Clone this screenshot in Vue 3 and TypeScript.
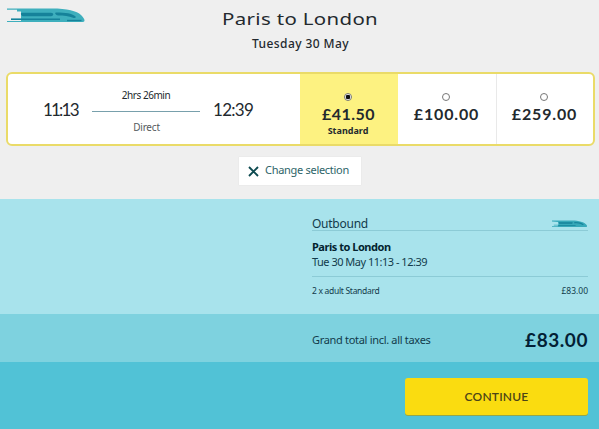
<script setup lang="ts">
import { ref } from 'vue'

interface Fare {
  price: string
  name: string
}

const fares: Fare[] = [
  { price: '£41.50', name: 'Standard' },
  { price: '£100.00', name: '' },
  { price: '£259.00', name: '' },
]
const selected = ref<number>(0)
</script>

<template>
  <main class="page">
    <section class="top">
      <header class="header">
        <svg class="train" viewBox="0 0 78 15" preserveAspectRatio="none" aria-hidden="true">
          <path d="M0 .5H45C60 .5 70 3 74 7c2 2 3.500 4 3.500 5.500 0 1-1 1.500-3 1.500H0v-1H14V11.700H4v-1H14V3.500H10V1.700H0Z" fill="#3eafbd" />
          <path d="M15 4.800H44c3 0 3 3.400 0 3.400H16c-2 0-3-3.400-1-3.400ZM49 4.500c10 0 16 1 19 3.500 2 1.500 0 2.500-2 1.800C62 8 57 7.500 51 7.500c-2 0-4-3-2-3ZM4 10.600H53v1.400H4Z" fill="#15829a" />
          <path d="M60 12.500H74.500" fill="none" stroke="#15829a" stroke-width="1.400" />
        </svg>
        <h1 class="title">Paris to London</h1>
        <p class="date">Tuesday 30 May</p>
      </header>

      <div class="card">
        <div class="journey">
          <span class="time depart">11:13</span>
          <div class="leg">
            <span class="duration">2hrs 26min</span>
            <span class="track"></span>
            <span class="direct">Direct</span>
          </div>
          <span class="time arrive">12:39</span>
        </div>
        <div
          v-for="(fare, i) in fares"
          :key="fare.price"
          class="fare"
          :class="{ active: selected === i }"
          @click="selected = i"
        >
          <span class="radio"></span>
          <span class="price">{{ fare.price }}</span>
          <span class="class-name">{{ fare.name }}</span>
        </div>
      </div>

      <button class="change">
        <svg class="cross" viewBox="0 0 11 11" aria-hidden="true">
          <path d="M1 1L10 10M10 1L1 10" fill="none" stroke="#0d4a50" stroke-width="1.9" />
        </svg>
        <span class="change-label">Change selection</span>
      </button>
    </section>

    <section class="summary">
      <div class="outbound">
        <span class="outbound-label">Outbound</span>
        <svg class="train-small" viewBox="0 0 80 16" preserveAspectRatio="none" aria-hidden="true">
          <path d="M0 .8H44C60 .8 72 4 77 10c2.500 3.500.5 4-4 4H0v-1.500H13V11H4V9.500H14V4L0 2.800Z" fill="#36a9b9" />
          <path d="M14 4.500H45c2 0 1 3-1 3H16ZM50 4c10 0 17 1.600 21 5l-3 .8C63 7 57 6.500 49 6.500ZM14 10.300H54l-3 1.700H14Z" fill="#15829a" />
        </svg>
      </div>
      <div class="trip">
        <span class="trip-name">Paris to London</span>
        <span class="trip-time">Tue 30 May 11:13 - 12:39</span>
      </div>
      <div class="passengers">
        <span class="adults">2 x adult Standard</span>
        <span class="adults-price">£83.00</span>
      </div>
    </section>

    <section class="total">
      <span class="total-label">Grand total incl. all taxes</span>
      <span class="total-price">£83.00</span>
    </section>

    <footer class="footer">
      <button class="continue"><span class="continue-label">CONTINUE</span></button>
    </footer>
  </main>
</template>

<style>
body {
  margin: 0;
}
</style>

<style scoped>
* {
  box-sizing: border-box;
}
.page {
  width: 599px;
  height: 429px;
  display: flex;
  flex-direction: column;
  overflow: hidden;
  font-family: "Noto Sans", sans-serif;
  color: #23292e;
  white-space: nowrap;
}
button {
  border: 0;
  padding: 0;
  font-family: inherit;
}
.top {
  height: 199px;
  background: #efefef;
  display: flex;
  flex-direction: column;
  align-items: center;
}
.header {
  width: 599px;
  height: 72px;
  display: grid;
  grid-template-columns: 86px 1fr 86px;
  grid-template-rows: 34px 20px;
  justify-items: center;
}
.train {
  width: 78px;
  height: 15px;
  margin: 8px 0 0 7px;
  justify-self: start;
}
.title {
  margin: 3px 0 0 2px;
  font-size: 17px;
  line-height: 31px;
  font-weight: 400;
  letter-spacing: 0.300px;
  transform: scaleX(1.2);
}
.date {
  grid-column: 2;
  margin: 0 0 0 2px;
  font-size: 12px;
  line-height: 20px;
  font-weight: 500;
  letter-spacing: 0.400px;
}
.card {
  width: 589px;
  height: 74px;
  margin-left: 2px;
  display: grid;
  grid-template-columns: 292px 98px 98px 97px;
  background: #fff;
  border: 2px solid #eadb68;
  border-radius: 6px;
  overflow: hidden;
}
.journey {
  display: grid;
  grid-template-columns: 84px 108px 1fr;
}
.time {
  font-family: Lato, sans-serif;
  font-size: 17px;
  line-height: 72px;
}
.depart {
  padding-left: 35px;
  letter-spacing: -1.800px;
}
.arrive {
  padding-left: 13px;
  letter-spacing: -0.700px;
}
.leg {
  display: flex;
  flex-direction: column;
  align-items: center;
  padding-top: 13px;
  font-size: 10px;
  line-height: 16px;
}
.duration {
  letter-spacing: -0.450px;
}
.track {
  width: 108px;
  height: 1px;
  margin: 8px 0 7px;
  background: #78a0ac;
}
.direct {
  margin-left: 1px;
  letter-spacing: -0.200px;
  color: #555a5e;
}
.fare {
  display: flex;
  flex-direction: column;
  align-items: center;
  padding: 19px 3px 0 0;
  border-left: 1px solid #e9e9e9;
}
.fare:last-child {
  padding-right: 2px;
}
.fare.active {
  background: #fdf281;
  border-left-color: #fdf281;
}
.fare.active + .fare,
.journey + .fare {
  border-left-color: transparent;
}
.radio {
  width: 8px;
  height: 8px;
  border: 1px solid #777;
  border-radius: 50%;
  background: #fff;
}
.active .radio {
  background: radial-gradient(circle, #111 0 2px, #fff 2.600px);
}
.price {
  font-family: Lato, sans-serif;
  font-size: 16px;
  line-height: 20px;
  font-weight: 700;
  letter-spacing: 0.850px;
  margin: 3px -1px 0 0;
}
.active .price {
  letter-spacing: 0.450px;
}
.class-name {
  font-size: 9px;
  line-height: 13px;
  font-weight: 700;
}
.change {
  width: 122px;
  height: 28px;
  margin: 11px 0 0 1px;
  display: flex;
  align-items: center;
  gap: 6px;
  padding-left: 9px;
  background: #fff;
  box-shadow: 0 0 1px #d8dcdc;
  color: #2d6468;
  font-size: 11px;
}
.change-label {
  letter-spacing: -0.290px;
  padding-bottom: 3px;
}
.cross {
  width: 11px;
  height: 11px;
}
.summary {
  height: 115px;
  padding: 15px 11px 0 312px;
  background: #a8e3ec;
  color: #123b4b;
}
.outbound {
  height: 17px;
  display: flex;
  justify-content: space-between;
  border-bottom: 1px solid #8ccbd6;
}
.outbound-label {
  font-size: 12px;
  line-height: 19px;
  letter-spacing: -0.250px;
}
.train-small {
  width: 36px;
  height: 8px;
  margin-top: 6px;
}
.trip {
  height: 46px;
  display: flex;
  flex-direction: column;
  padding-top: 8px;
  font-size: 11px;
  line-height: 15px;
  border-bottom: 1px solid #8ccbd6;
}
.trip-name {
  font-weight: 700;
  letter-spacing: -0.470px;
  color: #03232f;
}
.trip-time {
  letter-spacing: -0.500px;
}
.passengers {
  display: flex;
  justify-content: space-between;
  padding-top: 7px;
  font-size: 8.500px;
  line-height: 14px;
}
.adults {
  letter-spacing: -0.300px;
}
.total {
  height: 48px;
  padding: 2px 11px 0 312px;
  display: flex;
  justify-content: space-between;
  align-items: center;
  background: #7ed2df;
  color: #123b4b;
}
.total-label {
  font-size: 11px;
  letter-spacing: -0.310px;
}
.total-price {
  font-family: Lato, sans-serif;
  font-size: 19px;
  font-weight: 700;
  letter-spacing: 0.550px;
  color: #031f35;
}
.footer {
  height: 67px;
  padding: 16px 11px 0 0;
  display: flex;
  justify-content: flex-end;
  background: #51c2d6;
}
.continue {
  width: 183px;
  height: 37px;
  background: #fadc10;
  border-radius: 3px;
  box-shadow: 0 1px 0 #91a64c;
  color: #4b4417;
  font-family: Lato, sans-serif;
  font-size: 12px;
  font-weight: 600;
}
.continue-label {
  letter-spacing: 0.200px;
}
</style>
